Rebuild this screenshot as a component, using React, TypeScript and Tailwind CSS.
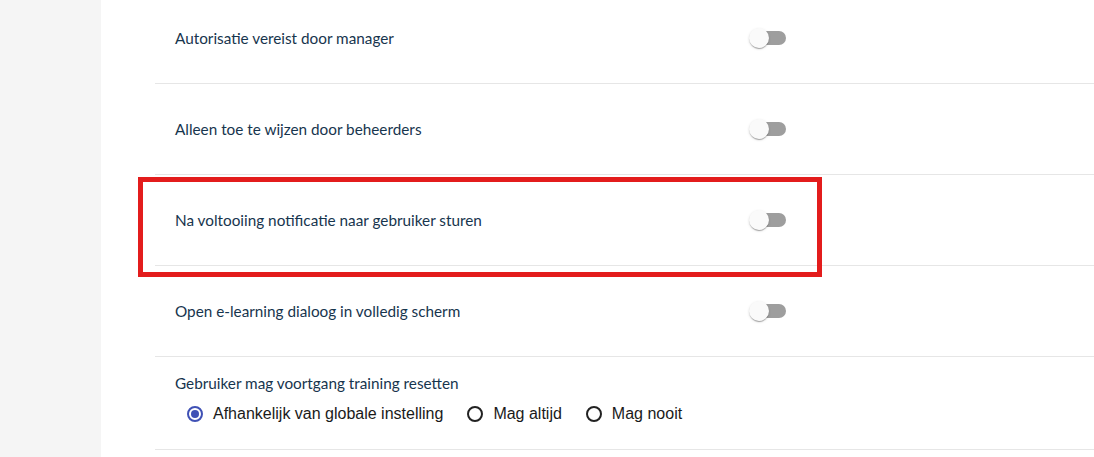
import type { ReactNode } from "react";

function Toggle() {
  return (
    <div className="relative w-[40px] h-[20px] flex items-center">
      <div className="absolute left-[4px] w-[34px] h-[14px] rounded-full bg-[#9e9e9e]" />
      <div className="absolute left-[1px] top-0 w-[20px] h-[20px] rounded-full bg-[#fafafa] shadow-[0_2px_1px_-1px_rgba(0,0,0,0.2),0_1px_1px_0_rgba(0,0,0,0.14),0_1px_3px_0_rgba(0,0,0,0.12)]" />
    </div>
  );
}

function ToggleRow({ label, children }: { label: string; children?: ReactNode }) {
  return (
    <div className="relative h-[91px] border-b border-[#e6e6e6] flex items-center pl-5">
      <div className="w-[573px] text-[15.3px] text-[#17354e]">{label}</div>
      <Toggle />
      {children}
    </div>
  );
}

function Radio({ label, checked }: { label: string; checked?: boolean }) {
  return (
    <label className="flex items-center gap-[10px]">
      <span
        className={`w-[16px] h-[16px] rounded-full border-2 flex items-center justify-center ${
          checked ? "border-[#3f51b5]" : "border-[#222]"
        }`}
      >
        {checked && <span className="w-[8px] h-[8px] rounded-full bg-[#3f51b5]" />}
      </span>
      <span className="text-[16px] text-[#1a1a1a] font-['Liberation_Sans',Arial,sans-serif]">{label}</span>
    </label>
  );
}

export default function App() {
  return (
    <div className="flex w-[1094px] h-[457px] overflow-hidden bg-white font-['Lato',sans-serif]">
      <aside className="w-[101px] shrink-0 bg-[#f5f5f5]" />
      <div className="flex-1 pl-[54px]">
        <div className="-mt-[7px]">
          <ToggleRow label="Autorisatie vereist door manager" />
          <ToggleRow label="Alleen toe te wijzen door beheerders" />
          <ToggleRow label="Na voltooiing notificatie naar gebruiker sturen">
            <div className="absolute left-[-17px] top-[2px] w-[684px] h-[100px] border-[5px] border-[#e31c1c] pointer-events-none" />
          </ToggleRow>
          <ToggleRow label="Open e-learning dialoog in volledig scherm" />
          <div className="h-[93px] border-b border-[#e6e6e6] pl-5 pt-[16px]">
            <div className="text-[15.3px] text-[#17354e] leading-5">Gebruiker mag voortgang training resetten</div>
            <div className="flex items-center gap-[24px] mt-[9px] pl-[12px]">
              <Radio label="Afhankelijk van globale instelling" checked />
              <Radio label="Mag altijd" />
              <Radio label="Mag nooit" />
            </div>
          </div>
        </div>
      </div>
    </div>
  );
}
